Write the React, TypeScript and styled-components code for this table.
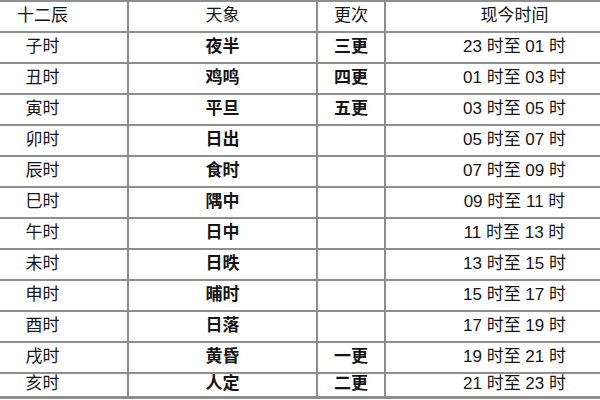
import React from 'react';
import styled, { createGlobalStyle } from 'styled-components';

const GlobalStyle = createGlobalStyle`
    html, body {
        margin: 0;
        padding: 0;
        background: #ffffff;
    }
`;

const Frame = styled.div`
    width: 600px;
    height: 400px;
    overflow: hidden;
    background: #ffffff;
`;

const Table = styled.table`
    margin-left: -42px;
    width: 685px;
    table-layout: fixed;
    border-collapse: collapse;
    font-family: 'Liberation Sans', 'Noto Sans CJK SC', sans-serif;
    font-size: 17px;
    color: #151515;
    border-top: 2px solid #8e8e8e;
    border-bottom: 3px solid #8e8e8e;
`;

const Row = styled.tr<{ $h: number }>`
    height: ${(p) => p.$h}px;
`;

const Cell = styled.td<{ $bold?: boolean }>`
    padding: 0 0 2px;
    text-align: center;
    vertical-align: middle;
    line-height: 1;
    white-space: pre;
    font-weight: ${(p) => (p.$bold ? 700 : 400)};
    border: 2px solid #8e8e8e;
    border-left-color: #909090;
    &:first-child {
        border-left: none;
    }
    &:last-child {
        border-right: none;
    }
`;

const rows: [string, string, string, string][] = [
    ['子时', '夜半', '三更', '23 时至 01 时'],
    ['丑时', '鸡鸣', '四更', '01 时至 03 时'],
    ['寅时', '平旦', '五更', '03 时至 05 时'],
    ['卯时', '日出', '', '05 时至 07 时'],
    ['辰时', '食时', '', '07 时至 09 时'],
    ['巳时', '隅中', '', '09 时至 11 时'],
    ['午时', '日中', '', '11 时至 13 时'],
    ['未时', '日昳', '', '13 时至 15 时'],
    ['申时', '晡时', '', '15 时至 17 时'],
    ['酉时', '日落', '', '17 时至 19 时'],
    ['戌时', '黄昏', '一更', '19 时至 21 时'],
    ['亥时', '人定', '二更', '21 时至 23 时'],
];

export default function App() {
    return (
        <Frame>
            <GlobalStyle />
            <Table>
                <colgroup>
                    <col style={{ width: 170 }} />
                    <col style={{ width: 189 }} />
                    <col style={{ width: 68 }} />
                    <col style={{ width: 258 }} />
                </colgroup>
                <tbody>
                    <Row $h={31}>
                        <Cell>十二辰</Cell>
                        <Cell>天象</Cell>
                        <Cell>更次</Cell>
                        <Cell>现今时间</Cell>
                    </Row>
                    {rows.map((r, i) => (
                        <Row key={i} $h={i === rows.length - 1 ? 24 : 31}>
                            <Cell>{r[0]}</Cell>
                            <Cell $bold>{r[1]}</Cell>
                            <Cell $bold>{r[2]}</Cell>
                            <Cell>{r[3]}</Cell>
                        </Row>
                    ))}
                </tbody>
            </Table>
        </Frame>
    );
}
